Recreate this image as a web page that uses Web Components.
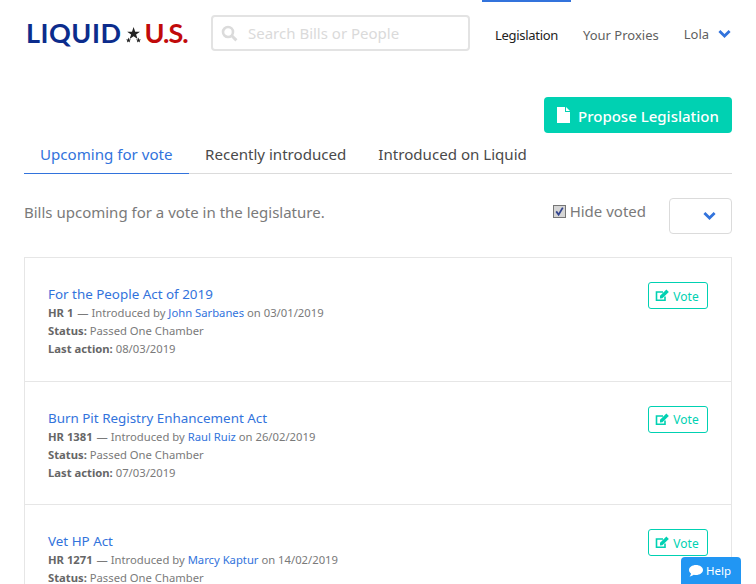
<!DOCTYPE html>
<html>
<head>
<meta charset="utf-8">
<style>
  html, body { margin:0; padding:0; height:584px; overflow:hidden; background:#fff; }
  body { font-family:"Noto Sans", "Open Sans", sans-serif; color:#4a4a4a; position:relative; }
</style>
</head>
<body>
<site-nav></site-nav>
<page-content>
  <bill-card name="For the People Act of 2019" num="HR 1" by="John Sarbanes" date="03/01/2019" status="Passed One Chamber" action="08/03/2019"></bill-card>
  <bill-card name="Burn Pit Registry Enhancement Act" num="HR 1381" by="Raul Ruiz" date="26/02/2019" status="Passed One Chamber" action="07/03/2019"></bill-card>
  <bill-card name="Vet HP Act" num="HR 1271" by="Marcy Kaptur" date="14/02/2019" status="Passed One Chamber" action="07/03/2019"></bill-card>
</page-content>
<help-button></help-button>

<script>
const chevron = `<svg width="13" height="10" viewBox="0 0 13 10"><path d="M1.400 2 L6.500 7 L11.600 2" fill="none" stroke="#3273dc" stroke-width="2.800"/></svg>`;

class SiteNav extends HTMLElement {
    constructor() {
        super();
        this.attachShadow({ mode: "open" });
    }
    connectedCallback() {
        this.shadowRoot.innerHTML = `
      <style>
        * { box-sizing:border-box; }
        :host { display:flex; height:68px; padding-left:26px; align-items:flex-start; }
        .logo { display:flex; align-items:center; margin-top:17px; height:31px; width:161px; font-family:"Lato", sans-serif; font-weight:700; font-size:27px; line-height:31px; white-space:nowrap; }
        .liquid { color:#0c2c8c; letter-spacing:.5px; }
        .us { color:#c10a0a; letter-spacing:-1px; }
        .logo svg { margin:4px 3px 0 5px; flex:none; }
        .search { margin:15px 0 0 24px; width:259px; height:36px; border:2px solid #e3e3e3; border-radius:4px; display:flex; align-items:center; padding-left:8px; gap:10px; color:#dadada; font-size:15px; }
        .links { display:flex; margin-left:12px; height:68px; }
        .link { display:flex; align-items:center; height:68px; padding:0 12px 1px; font-size:13px; color:#5f5f5f; border-top:2px solid transparent; }
        .link.active { color:#222; border-top-color:#3273dc; width:89px; justify-content:center; padding:0 0 1px; letter-spacing:-.3px; }
        .user { padding-left:13px; gap:9px; margin-top:-1px; }
      </style>
      <div class="logo"><span class="liquid">LIQUID</span><svg width="15" height="16" viewBox="0 0 15 16"><path fill="#222" d="M7.600 0 9.200 4.700 14 4.700 10.100 7.600 11.600 12 7.600 9.300 3.600 12 5.100 7.600 1.200 4.700 6 4.700Z"/><path fill="#222" d="M2.500 10.500 3.200 12.500 5 12.500 3.600 13.700 4.100 15.500 2.500 14.400 .9 15.500 1.400 13.700 0 12.500 1.800 12.500Z M12.500 10.500 13.200 12.500 15 12.500 13.600 13.700 14.100 15.500 12.500 14.400 10.900 15.500 11.400 13.700 10 12.500 11.800 12.500Z"/></svg><span class="us">U.S.</span></div>
      <div class="search">
        <svg width="17" height="17" viewBox="0 0 17 17"><circle cx="7" cy="7" r="5" fill="none" stroke="#dbdbdb" stroke-width="2.600"/><path d="M10.800 10.800 15.400 15.400" stroke="#dbdbdb" stroke-width="3"/></svg>
        <span>Search Bills or People</span>
      </div>
      <nav class="links">
        <a class="link active">Legislation</a>
        <a class="link">Your Proxies</a>
        <a class="link user"><span>Lola</span>${chevron}</a>
      </nav>
    `;
    }
}

class PageContent extends HTMLElement {
    constructor() {
        super();
        this.attachShadow({ mode: "open" });
    }
    connectedCallback() {
        this.shadowRoot.innerHTML = `
      <style>
        * { box-sizing:border-box; }
        :host { display:block; padding:29px 24px 0; }
        .actions { display:flex; justify-content:flex-end; }
        .propose { height:36px; width:188px; background:#00d1b2; border-radius:4px; color:#fff; font-size:15px; font-weight:500; display:flex; align-items:center; justify-content:center; gap:8px; padding-top:1px; }
        .propose svg { margin-top:-2px; }
        .tabs { display:flex; border-bottom:1px solid #dbdbdb; height:41px; }
        .tab { padding:0 16px; height:41px; line-height:42px; font-size:15.100px; color:#4a4a4a; white-space:nowrap; }
        .tab.active { color:#3273dc; border-bottom:1px solid #3273dc; width:165px; }
        .filter { display:flex; align-items:center; height:36px; margin-top:24px; font-size:15px; color:#7a7a7a; }
        .filter .text { flex:1; margin-top:-8px; }
        .check { display:flex; align-items:center; gap:4px; margin-right:23px; margin-top:-10px; }
        .box { width:13px; height:13px; background:#d6d6d6; border:1px solid #767676; display:flex; }
        .drop { width:63px; height:36px; border:1px solid #dbdbdb; border-radius:4px; display:flex; align-items:center; justify-content:flex-end; padding-right:15px; }
        .list { margin-top:23px; border:1px solid #e6e6e6; border-bottom:0; }
      </style>
      <div class="actions">
        <div class="propose">
          <svg width="13" height="16" viewBox="0 0 13 16"><path fill="#fff" d="M0 0H8V5H13V16H0Z M9 0 13 4H9Z"/></svg>
          <span>Propose Legislation</span>
        </div>
      </div>
      <div class="tabs">
        <div class="tab active">Upcoming for vote</div>
        <div class="tab">Recently introduced</div>
        <div class="tab">Introduced on Liquid</div>
      </div>
      <div class="filter">
        <span class="text">Bills upcoming for a vote in the legislature.</span>
        <span class="check"><span class="box"><svg width="11" height="11" viewBox="0 0 11 11"><path d="M2.200 5.400 4.600 8.600 8.800 1.600" fill="none" stroke="#33458f" stroke-width="1.800"/></svg></span><span>Hide voted</span></span>
        <span class="drop">${chevron}</span>
      </div>
      <div class="list"><slot></slot></div>
    `;
    }
}

class BillCard extends HTMLElement {
    constructor() {
        super();
        this.attachShadow({ mode: "open" });
    }
    connectedCallback() {
        const a = (n) => this.getAttribute(n);
        this.shadowRoot.innerHTML = `
      <style>
        * { box-sizing:border-box; }
        :host { display:flex; box-sizing:border-box; justify-content:space-between; align-items:flex-start; height:123.500px; padding:24px 23px 0; border-bottom:1px solid #e6e6e6; font-size:11.250px; line-height:18px; color:#7a7a7a; }
        .title { font-size:13.400px; line-height:24px; color:#3273dc; height:22px; }
        b { color:#666; font-weight:700; }
        .num { margin-right:1px; }
        .by { color:#3273dc; }
        .vote { height:27px; width:60px; border:1px solid #00d1b2; border-radius:3px; color:#00d1b2; display:flex; align-items:center; justify-content:center; gap:3px; font-size:12px; padding-right:2px; }
        .vote span { margin-top:2px; }
      </style>
      <div>
        <div class="title">${a("name")}</div>
        <div><b class="num">${a("num")}</b> — Introduced by <span class="by">${a("by")}</span> on ${a("date")}</div>
        <div><b>Status:</b> ${a("status")}</div>
        <div><b>Last action:</b> ${a("action")}</div>
      </div>
      <div class="vote">
        <svg width="15" height="13" viewBox="0 0 15 13"><path d="M10 7.500V11.200H1.500V3H8" fill="none" stroke="#00d1b2" stroke-width="1.600"/><path fill="#00d1b2" d="M5 6.800 11.400.6 13.800 3 7.400 9.200 5 9.400Z"/></svg>
        <span>Vote</span>
      </div>
    `;
    }
}

class HelpButton extends HTMLElement {
    constructor() {
        super();
        this.attachShadow({ mode: "open" });
    }
    connectedCallback() {
        this.shadowRoot.innerHTML = `
      <style>
        :host { position:fixed; right:15px; bottom:0; width:60px; height:27px; box-sizing:border-box; padding-right:2px; background:#2196f3; border-radius:4px 4px 0 0; color:#fff; font-size:11.500px; display:flex; align-items:center; justify-content:center; gap:3px; }
      </style>
      <svg width="14" height="12" viewBox="0 0 14 12"><path fill="#fff" d="M7 0C3.100 0 0 2.200 0 5c0 1.400.8 2.600 2 3.500C1.900 9.700 1.300 10.700.6 11.400c1.700-.1 3.200-.8 4.200-1.600.7.1 1.400.2 2.200.2 3.900 0 7-2.200 7-5S10.900 0 7 0Z"/></svg>
      <span>Help</span>
    `;
    }
}

customElements.define('site-nav', SiteNav);
customElements.define('page-content', PageContent);
customElements.define('bill-card', BillCard);
customElements.define('help-button', HelpButton);
</script>
</body>
</html>
